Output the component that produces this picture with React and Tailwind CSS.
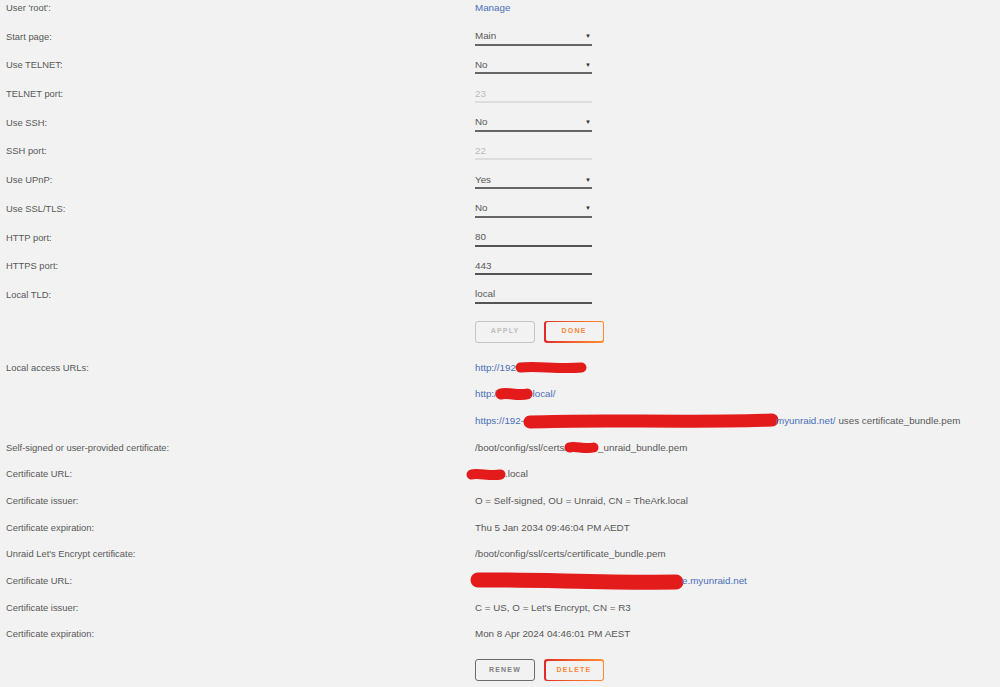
import React from "react";

// red marker scribble used to hide private bits
const Scribble = ({ w, h = 12, ml = 0, mr = 0, tilt = 0 }) => (
  <span className="inline-block align-middle" style={{ width: w, height: h, marginLeft: ml, marginRight: mr }}>
    <svg width={w} height={h} viewBox={`0 0 ${w} ${h}`} className="overflow-visible">
      <path
        d={`M ${h / 2} ${h / 2 + tilt} C ${w * 0.3} ${h / 2 - 2}, ${w * 0.6} ${h / 2 + 2}, ${w - h / 2} ${h / 2 - tilt}`}
        stroke="#e41b1b"
        strokeWidth={h - 1}
        strokeLinecap="round"
        fill="none"
      />
    </svg>
  </span>
);

const Select = ({ value }) => (
  <div className="w-[117px] h-[17px] border-b-2 border-[#666] flex items-center justify-between pr-[1px]">
    <span>{value}</span>
    <span className="text-[6px] leading-none text-[#333] font-bold">▼</span>
  </div>
);

const Input = ({ value, disabled }) => (
  <div
    className={
      "w-[117px] h-[17px] flex items-center " +
      (disabled ? "border-b-2 border-[#ddd] text-[#bbb]" : "border-b-2 border-[#555]")
    }
  >
    {value}
  </div>
);

const Btn = ({ children, kind }) => {
  if (kind === "hot")
    return (
      <div className="w-[60px] h-[22px] rounded-[3px] p-[1.5px] bg-gradient-to-r from-[#e22828] to-[#ff8c2f]">
        <div className="w-full h-full rounded-[2px] bg-[#f2f2f2] flex items-center justify-center text-[7px] font-bold tracking-[1.2px] text-[#f5873a]">
          {children}
        </div>
      </div>
    );
  const border = kind === "dim" ? "border-[#c4c4c4] text-[#bdbdbd]" : "border-[#6b6b6b] text-[#808080]";
  return (
    <div className={"w-[60px] h-[22px] rounded-[3px] border-[1.5px] flex items-center justify-center text-[7px] font-bold tracking-[1.2px] " + border}>
      {children}
    </div>
  );
};

const Row = ({ label, children }) => (
  <div className="flex h-[28.7px]">
    <div className="w-[475px] pl-[6px] leading-[16px] text-[9.4px]">{label}</div>
    <div className="leading-[16px]">{children}</div>
  </div>
);

const InfoRow = ({ label, children }) => (
  <div className="flex h-[26.7px]">
    <div className="w-[475px] pl-[6px] leading-[16px] text-[9.4px]">{label}</div>
    <div className="leading-[16px] whitespace-nowrap flex items-center h-[16px]">{children}</div>
  </div>
);

const Link = ({ children }) => <span className="text-[#4a6fb8]">{children}</span>;

export default function App() {
  return (
    <div className="w-[1000px] h-[687px] overflow-hidden bg-[#f2f2f2] text-[#585858] text-[9.8px] font-['Liberation_Sans',Arial,sans-serif]">
      <Row label="User 'root':">
        <Link>Manage</Link>
      </Row>
      <Row label="Start page:"><Select value="Main" /></Row>
      <Row label="Use TELNET:"><Select value="No" /></Row>
      <Row label="TELNET port:"><Input value="23" disabled /></Row>
      <Row label="Use SSH:"><Select value="No" /></Row>
      <Row label="SSH port:"><Input value="22" disabled /></Row>
      <Row label="Use UPnP:"><Select value="Yes" /></Row>
      <Row label="Use SSL/TLS:"><Select value="No" /></Row>
      <Row label="HTTP port:"><Input value="80" /></Row>
      <Row label="HTTPS port:"><Input value="443" /></Row>
      <Row label="Local TLD:"><Input value="local" /></Row>

      <div className="flex gap-[9px] pl-[475px] mt-[5px]">
        <Btn kind="dim">APPLY</Btn>
        <Btn kind="hot">DONE</Btn>
      </div>

      <div className="mt-[17px]">
        <InfoRow label="Local access URLs:">
          <Link>http://192</Link>
          <Scribble w={72} h={11} ml={-1} />
        </InfoRow>
        <InfoRow label="">
          <Link>http:/</Link>
          <Scribble w={38} h={12} ml={-2} mr={-3} />
          <Link>.local/</Link>
        </InfoRow>
        <InfoRow label="">
          <Link>https://192-</Link>
          <Scribble w={256} h={14} ml={-1} mr={-3} tilt={1} />
          <Link>myunraid.net/</Link>
          <span className="ml-[3px]">uses certificate_bundle.pem</span>
        </InfoRow>
        <InfoRow label="Self-signed or user-provided certificate:">
          <span>/boot/config/ssl/certs/</span>
          <Scribble w={35} h={11} ml={-3} mr={-1} />
          <span>_unraid_bundle.pem</span>
        </InfoRow>
        <InfoRow label="Certificate URL:">
          <Scribble w={40} h={11} ml={-9} mr={-1} />
          <span>.local</span>
        </InfoRow>
        <InfoRow label="Certificate issuer:">O = Self-signed, OU = Unraid, CN = TheArk.local</InfoRow>
        <InfoRow label="Certificate expiration:">Thu 5 Jan 2034 09:46:04 PM AEDT</InfoRow>
        <InfoRow label="Unraid Let's Encrypt certificate:">/boot/config/ssl/certs/certificate_bundle.pem</InfoRow>
        <InfoRow label="Certificate URL:">
          <Scribble w={214} h={16} ml={-5} mr={-2} tilt={-1} />
          <Link>e.myunraid.net</Link>
        </InfoRow>
        <InfoRow label="Certificate issuer:">C = US, O = Let's Encrypt, CN = R3</InfoRow>
        <InfoRow label="Certificate expiration:">Mon 8 Apr 2024 04:46:01 PM AEST</InfoRow>
      </div>

      <div className="flex gap-[9px] pl-[475px] mt-[6px]">
        <Btn kind="dark">RENEW</Btn>
        <Btn kind="hot">DELETE</Btn>
      </div>
    </div>
  );
}
